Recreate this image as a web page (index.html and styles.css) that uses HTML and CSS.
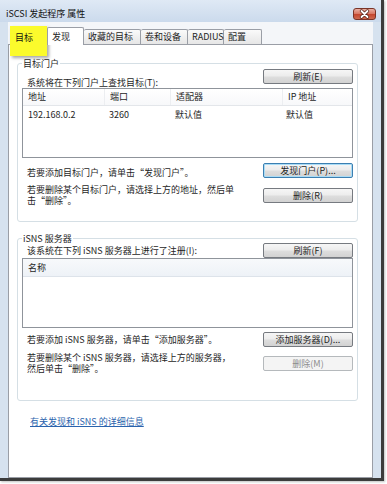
FILE: index.html
```html
<!DOCTYPE html>
<html lang="zh-CN">
<head>
<meta charset="utf-8">
<title>iSCSI 发起程序 属性</title>
<link rel="stylesheet" href="styles.css">
</head>
<body>
<div class="window">
  <div class="titlebar">
    <span class="title">iSCSI 发起程序 属性</span>
    <span class="close">
      <svg width="23" height="12" viewBox="0 0 23 12">
        <path d="M8.5 3 L14.5 9 M14.5 3 L8.5 9" stroke="#5a2418" stroke-width="3.4" stroke-linecap="round"/>
        <path d="M8.5 3 L14.5 9 M14.5 3 L8.5 9" stroke="#ffffff" stroke-width="1.8" stroke-linecap="round"/>
      </svg>
    </span>
  </div>
  <div class="client">
    <div class="tabs">
      <div class="tab w37">目标</div>
      <div class="tab tab-active w37">发现</div>
      <div class="tab w57">收藏的目标</div>
      <div class="tab w47">卷和设备</div>
      <div class="tab w36">RADIUS</div>
      <div class="tab w38">配置</div>
    </div>
    <div class="panel">
      <div class="group group-portal">
        <div class="group-title">目标门户</div>
        <div class="row row-first">
          <span class="label label-low">系统将在下列门户上查找目标(T):</span>
          <button class="btn">刷新(E)</button>
        </div>
        <div class="list">
          <div class="list-head">
            <span class="col c1">地址</span>
            <span class="col c2">端口</span>
            <span class="col c3">适配器</span>
            <span class="col c4">IP 地址</span>
          </div>
          <div class="list-row">
            <span class="col c1">192.168.0.2</span>
            <span class="col c2">3260</span>
            <span class="col c3">默认值</span>
            <span class="col c4">默认值</span>
          </div>
        </div>
        <div class="row row-add">
          <span class="label label-add">若要添加目标门户，请单击“发现门户”。</span>
          <button class="btn btn-default">发现门户(P)...</button>
        </div>
        <div class="row row-del">
          <span class="label">若要删除某个目标门户，请选择上方的地址，然后单<br>击“删除”。</span>
          <button class="btn">删除(R)</button>
        </div>
      </div>

      <div class="group group-isns">
        <div class="group-title">iSNS 服务器</div>
        <div class="row row-first2">
          <span class="label">该系统在下列 iSNS 服务器上进行了注册(I):</span>
          <button class="btn">刷新(F)</button>
        </div>
        <div class="list list2">
          <div class="list-head list-head2">
            <span class="col c1">名称</span>
          </div>
        </div>
        <div class="row row-add2">
          <span class="label">若要添加 iSNS 服务器，请单击“添加服务器”。</span>
          <button class="btn">添加服务器(D)...</button>
        </div>
        <div class="row row-del2">
          <span class="label">若要删除某个 iSNS 服务器，请选择上方的服务器，<br>然后单击“删除”。</span>
          <button class="btn btn-disabled" disabled>删除(M)</button>
        </div>
      </div>

      <a class="link" href="#">有关发现和 iSNS 的详细信息</a>
    </div>
  </div>
  <div class="annot">目标</div>
</div>
</body>
</html>
```

FILE: styles.css
```css
html, body {
  margin: 0;
  padding: 0;
}

body {
  width: 387px;
  height: 484px;
  background: #ffffff;
  font-family: "Noto Sans CJK SC", "Noto Sans", sans-serif;
  font-size: 9px;
  line-height: 11px;
  color: #1e1e1e;
  overflow: hidden;
}

.window {
  position: relative;
  width: 384px;
  height: 481px;
  box-sizing: border-box;
  border-right: 3px solid #3c3c3c;
  border-bottom: 3px solid #3c3c3c;
  background: #d6e2ef;
  display: flex;
  flex-direction: column;
  box-shadow: 1px 1px 2px rgba(0, 0, 0, 0.25);
}

.titlebar {
  height: 22px;
  flex: none;
  display: flex;
  align-items: flex-start;
  background: linear-gradient(#dfe9f5, #cbdaec);
}

.title {
  padding: 8px 0 0 6px;
  color: #111;
}

.close {
  margin: 8px 5px 0 auto;
  width: 23px;
  height: 12px;
  box-sizing: border-box;
  border: 1px solid #7a3427;
  border-radius: 3px;
  background: linear-gradient(#eab0a3 0%, #d97a66 45%, #c4472f 55%, #cf6a50 100%);
  display: flex;
  align-items: center;
  justify-content: center;
}

.close svg {
  display: block;
  margin: -1px;
}

.client {
  flex: 1;
  display: flex;
  flex-direction: column;
  padding: 5px 8px 0 8px;
  background: linear-gradient(90deg, #d6e2ef 0, #d6e2ef 8px, #f4f6f9 8px, #f4f6f9 373px, #d6e2ef 373px);
  min-height: 0;
}

.tabs {
  display: flex;
  align-items: flex-end;
  padding-left: 2px;
  height: 17px;
  flex: none;
}

.tab {
  height: 15px;
  box-sizing: border-box;
  border: 1px solid #9a9ea6;
  border-bottom: none;
  border-left: none;
  border-radius: 2px 2px 0 0;
  background: linear-gradient(#fafafa, #e6e6e6);
  padding-left: 4px;
  line-height: 14px;
  white-space: nowrap;
}

.tab:first-child {
  border-left: 1px solid #9a9ea6;
}

.tab-active {
  position: relative;
  z-index: 1;
  height: 18px;
  margin-bottom: -1px;
  background: #ffffff;
  border-left: 1px solid #9a9ea6;
  line-height: 17px;
}

.w37 { width: 37px; }
.w57 { width: 57px; }
.w47 { width: 47px; }
.w36 { width: 36px; }
.w38 { width: 38px; }

.panel {
  flex: 1;
  background: #ffffff;
  border: 1px solid #9a9ea6;
  padding: 18px 0 0 8px;
  display: flex;
  flex-direction: column;
  align-items: flex-start;
}

.group {
  width: 341px;
  box-sizing: border-box;
  border: 1px solid #d5dfe5;
  border-radius: 3px;
  padding: 0 4px;
  display: flex;
  flex-direction: column;
}

.group-portal {
  height: 159px;
}

.group-isns {
  height: 163px;
  margin-top: 16px;
}

.group-title {
  margin-top: -6px;
  width: fit-content;
  background: #ffffff;
  padding: 0 1px;
  line-height: 11px;
  color: #1e1e1e;
}

.row {
  display: flex;
  justify-content: space-between;
  align-items: center;
}

.label {
  padding-left: 5px;
  white-space: nowrap;
}

.row-first {
  align-items: flex-start;
}

.label-low {
  margin-top: 8px;
}

.row-add {
  align-items: flex-start;
  padding-top: 5px;
}

.label-add {
  margin-top: 4px;
}

.row-del {
  margin-top: 6px;
}

.row-first2 {
  margin-top: -1px;
}

.row-add2 {
  padding-top: 4px;
}

.row-del2 {
  margin-top: 5px;
}

.btn {
  width: 90px;
  height: 15px;
  box-sizing: border-box;
  padding: 0;
  margin: 0;
  border: 1px solid #767a80;
  border-radius: 2px;
  background: linear-gradient(#f6f6f6 0%, #ececec 48%, #dedede 52%, #d2d2d2 100%);
  font-family: inherit;
  font-size: 9px;
  line-height: 13px;
  color: #1e1e1e;
  text-align: center;
  flex: none;
}

.btn-default {
  border-color: #3c7fb1;
  box-shadow: inset 0 0 0 1px #a9dcf6;
}

.btn-disabled {
  border-color: #b5b9bc;
  background: #f4f4f4;
  color: #8c8c8c;
}

.list {
  height: 70px;
  box-sizing: border-box;
  border: 1px solid #8f949b;
  background: #ffffff;
  flex: none;
}

.list-head {
  display: flex;
  height: 17px;
  box-sizing: border-box;
  border-bottom: 1px solid #e3e6ea;
  background: linear-gradient(#ffffff, #f7f8fa);
  line-height: 16px;
}

.list-head2 {
  height: 18px;
  line-height: 18px;
  background: linear-gradient(#f7f9fb, #eef2f7);
  border-bottom-color: #dde3ea;
}

.list-head .col + .col {
  border-left: 1px solid #eceef1;
}

.list-row {
  display: flex;
  line-height: 11px;
  padding-top: 3px;
}

.col {
  box-sizing: border-box;
  padding-left: 5px;
  white-space: nowrap;
}

.c1 { width: 81px; }
.c2 { width: 66px; }
.c3 { width: 112px; }
.c4 { flex: 1; }

.list-row .c4 {
  padding-left: 4px;
}

.link {
  margin: 15px 0 0 13px;
  color: #2a63ad;
  text-decoration: underline;
  line-height: 11px;
}

.annot {
  position: absolute;
  left: 10px;
  top: 26px;
  width: 37px;
  height: 30px;
  box-sizing: border-box;
  background: #fbfb2c;
  padding: 6px 0 0 5px;
  color: #111;
  box-shadow: 2px 2px 3px rgba(0, 0, 0, 0.35);
}
```
